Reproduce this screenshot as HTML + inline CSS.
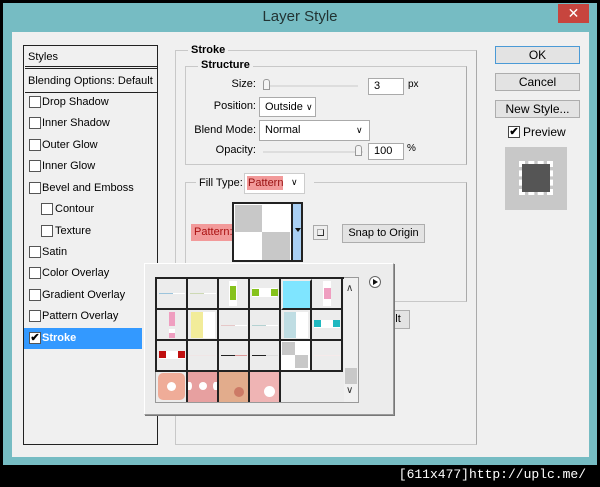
<!DOCTYPE html>
<html><head><meta charset="utf-8"><style>
*{margin:0;padding:0;box-sizing:border-box}
body{width:600px;height:487px;background:#000;position:relative;overflow:hidden;font-family:"Liberation Sans",Tahoma,sans-serif;font-size:11px;color:#000}
.a{position:absolute;white-space:nowrap}
.win{left:3px;top:3px;width:594px;height:462px;background:#76bcc3}
.cont{left:12px;top:32px;width:577px;height:425px;background:#f0f0f0}
.title{left:0;top:8px;width:600px;text-align:center;font-size:15px;color:#233}
.close{left:558px;top:4px;width:31px;height:19px;background:#c7453e;color:#fff;text-align:center;font-size:14px;line-height:19px}
.lp{left:23px;top:45px;width:135px;height:400px;border:1px solid #222;background:#f0f0f0}
.row{position:absolute;left:1px;width:132px;height:21px;border-bottom:1px solid #fafafa;line-height:21px;padding-left:18px}
.grp{border:1px solid #c8c8c8;border-right-color:#aaa}
.lbl{background:#f0f0f0;font-weight:bold;padding:0 3px}
.btn{background:#e3e3e3;border:1px solid #adadad;text-align:center;font-size:12px}
.inp{background:#fff;border:1px solid #aaa;padding-left:5px;line-height:15px}
.rt{text-align:right}
.cell{position:absolute;width:31px;height:31px;border-right:2px solid #222;border-bottom:2px solid #222;background:#ececec}
.ck{width:12px;height:12px;border:1px solid #555;background:#fff}
</style></head><body>
<div class="a win"></div>
<div class="a title">Layer Style</div>
<div class="a close">✕</div>
<div class="a cont"></div>

<div class="a lp">
 <div class="row" style="top:0;height:23px;border-bottom:3px double #222;padding-left:3px;line-height:22px">Styles</div>
 <div class="row" style="top:25px;height:22px;border-bottom:1px solid #222;padding-left:3px">Blending Options: Default</div>
</div>
<div class="a ck" style="left:29px;top:96px"></div><div class="a" style="left:42px;top:96px">Drop Shadow</div>
<div class="a ck" style="left:29px;top:117px"></div><div class="a" style="left:42px;top:117px">Inner Shadow</div>
<div class="a ck" style="left:29px;top:139px"></div><div class="a" style="left:42px;top:139px">Outer Glow</div>
<div class="a ck" style="left:29px;top:160px"></div><div class="a" style="left:42px;top:160px">Inner Glow</div>
<div class="a ck" style="left:29px;top:182px"></div><div class="a" style="left:42px;top:182px">Bevel and Emboss</div>
<div class="a ck" style="left:41px;top:203px"></div><div class="a" style="left:55px;top:203px">Contour</div>
<div class="a ck" style="left:41px;top:225px"></div><div class="a" style="left:55px;top:225px">Texture</div>
<div class="a ck" style="left:29px;top:246px"></div><div class="a" style="left:42px;top:246px">Satin</div>
<div class="a ck" style="left:29px;top:267px"></div><div class="a" style="left:42px;top:267px">Color Overlay</div>
<div class="a ck" style="left:29px;top:289px"></div><div class="a" style="left:42px;top:289px">Gradient Overlay</div>
<div class="a ck" style="left:29px;top:310px"></div><div class="a" style="left:42px;top:310px">Pattern Overlay</div>
<div class="a" style="left:24px;top:328px;width:118px;height:21px;background:#3399ff"></div>
<div class="a ck" style="left:29px;top:332px;font-size:11px;line-height:10px;text-align:center;font-weight:bold">✔</div><div class="a" style="left:42px;top:332px;color:#fff;font-weight:bold">Stroke</div>

<!-- right groups -->
<div class="a grp" style="left:175px;top:50px;width:302px;height:395px"></div>
<div class="a lbl" style="left:188px;top:44px">Stroke</div>
<div class="a grp" style="left:185px;top:66px;width:282px;height:99px"></div>
<div class="a lbl" style="left:198px;top:59px">Structure</div>
<div class="a rt" style="left:180px;top:78px;width:76px">Size:</div>
<div class="a" style="left:263px;top:85px;width:95px;height:2px;background:#ddd"></div>
<div class="a" style="left:263px;top:79px;width:7px;height:11px;border:1px solid #999;background:#f4f4f4;border-radius:3px 3px 0 0"></div>
<div class="a inp" style="left:368px;top:78px;width:36px;height:17px">3</div>
<div class="a" style="left:408px;top:79px;font-size:10px">px</div>
<div class="a rt" style="left:180px;top:100px;width:76px">Position:</div>
<div class="a inp" style="left:259px;top:97px;width:57px;height:20px;line-height:18px;font-size:11px">Outside <span style="font-size:9px">&#x2228;</span></div>
<div class="a rt" style="left:180px;top:124px;width:76px">Blend Mode:</div>
<div class="a inp" style="left:259px;top:120px;width:111px;height:21px;line-height:19px">Normal<span style="position:absolute;left:96px;font-size:9px">&#x2228;</span></div>
<div class="a rt" style="left:180px;top:144px;width:76px">Opacity:</div>
<div class="a" style="left:263px;top:151px;width:100px;height:2px;background:#ddd"></div>
<div class="a" style="left:355px;top:145px;width:7px;height:11px;border:1px solid #999;background:#f4f4f4;border-radius:3px 3px 0 0"></div>
<div class="a inp" style="left:368px;top:143px;width:36px;height:17px">100</div>
<div class="a" style="left:407px;top:143px;font-size:10px">%</div>

<div class="a grp" style="left:185px;top:182px;width:282px;height:120px"></div>
<div class="a" style="left:196px;top:176px;width:118px;height:16px;background:#f0f0f0"></div>
<div class="a" style="left:199px;top:177px">Fill Type:</div>
<div class="a" style="left:244px;top:173px;width:61px;height:21px;background:#fff;border:1px solid #ccc"></div>
<div class="a" style="left:247px;top:176px;width:36px;height:14px;background:#f29a9a;color:#911;font-size:11px;line-height:14px;padding-left:1px">Pattern</div>
<div class="a" style="left:291px;top:177px;font-size:9px">&#x2228;</div>
<div class="a" style="left:191px;top:224px;width:42px;height:17px;background:#f29a9a;color:#a11;line-height:17px;padding-left:3px">Pattern:</div>
<div class="a" style="left:232px;top:202px;width:61px;height:60px;border:2px solid #222;background:#fff"></div>
<div class="a" style="left:235px;top:205px;width:27px;height:27px;background:#c8c8c8"></div>
<div class="a" style="left:262px;top:232px;width:28px;height:28px;background:#c8c8c8"></div>
<div class="a" style="left:292px;top:202px;width:11px;height:60px;border:2px solid #222;border-left:1px solid #222;background:#a9cff3"></div>
<div class="a" style="left:295px;top:228px;border:3px solid transparent;border-top:4px solid #111;width:0;height:0"></div>
<div class="a" style="left:313px;top:225px;width:15px;height:15px;border:1px solid #aaa;background:#eee"></div>
<div class="a" style="left:317px;top:229px;width:7px;height:7px;border:1px solid #333;border-top-color:#aaa;border-left-color:#aaa"></div>
<div class="a btn" style="left:342px;top:224px;width:83px;height:19px;line-height:17px;font-size:11px">Snap to Origin</div>
<div class="a btn" style="left:380px;top:310px;width:30px;height:19px;line-height:17px;font-size:11px">ult</div>

<!-- popup -->
<div class="a" style="left:144px;top:263px;width:250px;height:152px;background:#ececec;border:1px solid #999;border-top-color:#fff;border-left-color:#fff;box-shadow:1px 1px 0 #777"></div>
<div class="a" style="left:155px;top:277px;width:204px;height:126px;border:1px solid #999;background:#ececec"></div>
<div class="a" style="left:155px;top:277px;width:189px;height:95px;border-left:2px solid #222;border-top:2px solid #222"></div>
<div class="a" style="left:157px;top:279px">
 <div class="cell" style="left:0;top:0"><div class="a" style="left:2px;top:14px;width:14px;height:1px;background:#9cc4dc"></div><div class="a" style="left:16px;top:14px;width:12px;height:1px;background:#fff"></div></div>
 <div class="cell" style="left:31px;top:0"><div class="a" style="left:2px;top:14px;width:14px;height:1px;background:#cdd9b4"></div><div class="a" style="left:16px;top:14px;width:12px;height:1px;background:#fff"></div></div>
 <div class="cell" style="left:62px;top:0"><div class="a" style="left:10px;top:2px;width:8px;height:25px;background:#fff"></div><div class="a" style="left:11px;top:7px;width:6px;height:14px;background:#86c21c"></div></div>
 <div class="cell" style="left:93px;top:0"><div class="a" style="left:2px;top:9px;width:25px;height:9px;background:#fff"></div><div class="a" style="left:2px;top:10px;width:7px;height:7px;background:#86c21c"></div><div class="a" style="left:21px;top:10px;width:7px;height:7px;background:#86c21c"></div></div>
 <div class="cell" style="left:124px;top:0;background:#7fe5ff;border:2px solid #ececec;border-right:2px solid #222;border-bottom:2px solid #222"></div>
 <div class="cell" style="left:155px;top:0"><div class="a" style="left:11px;top:2px;width:8px;height:25px;background:#fff"></div><div class="a" style="left:12px;top:9px;width:7px;height:11px;background:#ef9ec0"></div></div>
 <div class="cell" style="left:0;top:31px"><div class="a" style="left:12px;top:2px;width:6px;height:14px;background:#ef9ec0"></div><div class="a" style="left:12px;top:19px;width:6px;height:4px;background:#fff"></div><div class="a" style="left:12px;top:23px;width:6px;height:5px;background:#ef9ec0"></div></div>
 <div class="cell" style="left:31px;top:31px"><div class="a" style="left:3px;top:2px;width:12px;height:26px;background:#f2ec9a"></div><div class="a" style="left:15px;top:2px;width:12px;height:26px;background:#fff"></div></div>
 <div class="cell" style="left:62px;top:31px"><div class="a" style="left:2px;top:15px;width:14px;height:1px;background:#e6c8c8"></div><div class="a" style="left:16px;top:15px;width:12px;height:1px;background:#fff"></div></div>
 <div class="cell" style="left:93px;top:31px"><div class="a" style="left:2px;top:15px;width:14px;height:1px;background:#b4d2d2"></div><div class="a" style="left:16px;top:15px;width:12px;height:1px;background:#fff"></div></div>
 <div class="cell" style="left:124px;top:31px"><div class="a" style="left:3px;top:2px;width:12px;height:26px;background:#bfdde3"></div><div class="a" style="left:15px;top:2px;width:12px;height:26px;background:#fff"></div></div>
 <div class="cell" style="left:155px;top:31px"><div class="a" style="left:2px;top:10px;width:26px;height:8px;background:#fff"></div><div class="a" style="left:2px;top:10px;width:7px;height:7px;background:#1fb8c0"></div><div class="a" style="left:21px;top:10px;width:7px;height:7px;background:#1fb8c0"></div></div>
 <div class="cell" style="left:0;top:62px"><div class="a" style="left:2px;top:10px;width:26px;height:8px;background:#fff"></div><div class="a" style="left:2px;top:10px;width:7px;height:7px;background:#c01010"></div><div class="a" style="left:21px;top:10px;width:7px;height:7px;background:#c01010"></div></div>
 <div class="cell" style="left:31px;top:62px"><div class="a" style="left:2px;top:14px;width:26px;height:1px;background:#f0e6e6"></div></div>
 <div class="cell" style="left:62px;top:62px"><div class="a" style="left:2px;top:14px;width:14px;height:1px;background:#222"></div><div class="a" style="left:16px;top:14px;width:12px;height:1px;background:#d99"></div></div>
 <div class="cell" style="left:93px;top:62px"><div class="a" style="left:2px;top:14px;width:14px;height:1px;background:#222"></div><div class="a" style="left:16px;top:14px;width:12px;height:1px;background:#ddd"></div></div>
 <div class="cell" style="left:122px;top:60px;width:33px;height:33px;background:#fff;border:2px solid #222"><div class="a" style="left:1px;top:1px;width:13px;height:13px;background:#c8c8c8"></div><div class="a" style="left:14px;top:14px;width:13px;height:13px;background:#c8c8c8"></div></div>
 <div class="cell" style="left:155px;top:62px"><div class="a" style="left:2px;top:14px;width:26px;height:1px;background:#f6eaea"></div></div>
 <div class="cell" style="left:0;top:93px;height:30px;border-bottom:0;background:#ececec"><div class="a" style="left:1px;top:1px;width:27px;height:27px;background:#efac98;border-radius:5px"></div><div class="a" style="left:10px;top:10px;width:9px;height:9px;border-radius:50%;background:#fff"></div></div>
 <div class="cell" style="left:31px;top:93px;height:30px;border-bottom:0;background:#e7a0a0"><div class="a" style="left:11px;top:10px;width:8px;height:8px;border-radius:50%;background:#fff"></div><div class="a" style="left:0;top:10px;width:4px;height:8px;background:#fff;border-radius:0 50% 50% 0"></div><div class="a" style="left:25px;top:10px;width:4px;height:8px;background:#fff;border-radius:50% 0 0 50%"></div></div>
 <div class="cell" style="left:62px;top:93px;height:30px;border-bottom:0;background:#e2ac8c"><div class="a" style="left:15px;top:15px;width:10px;height:10px;border-radius:50%;background:#cc7a66"></div></div>
 <div class="cell" style="left:93px;top:93px;height:30px;border-bottom:0;background:#efb4b4"><div class="a" style="left:14px;top:14px;width:11px;height:11px;border-radius:50%;background:#fff"></div></div>
</div>
<div class="a" style="left:344px;top:278px;width:14px;height:124px;background:#f0f0f0"></div>
<div class="a" style="left:346px;top:283px;font-size:10px;color:#333">&#x2227;</div>
<div class="a" style="left:346px;top:385px;font-size:10px;color:#333">&#x2228;</div>
<div class="a" style="left:345px;top:368px;width:12px;height:16px;background:#c8c8c8"></div>
<div class="a" style="left:369px;top:276px;width:12px;height:12px;border:1px solid #666;border-radius:50%;background:#fff"></div>
<div class="a" style="left:373px;top:279px;border-left:5px solid #111;border-top:3px solid transparent;border-bottom:3px solid transparent;width:0;height:0"></div>

<div class="a btn" style="left:495px;top:46px;width:85px;height:18px;line-height:16px;border-color:#4a9ad6">OK</div>
<div class="a btn" style="left:495px;top:73px;width:85px;height:18px;line-height:16px">Cancel</div>
<div class="a btn" style="left:495px;top:100px;width:85px;height:18px;line-height:16px">New Style...</div>
<div class="a ck" style="left:508px;top:126px;border-color:#444;font-size:11px;line-height:10px;text-align:center;font-weight:bold">✔</div>
<div class="a" style="left:523px;top:125px;font-size:12px">Preview</div>
<div class="a" style="left:505px;top:147px;width:62px;height:63px;background:#c8c8c8"></div>
<div class="a" style="left:519px;top:161px;width:34px;height:34px;border:3px dashed #fff"></div>
<div class="a" style="left:522px;top:164px;width:28px;height:28px;background:#555"></div>

<div class="a" style="right:14px;top:467px;color:#fff;font-family:'Liberation Mono',monospace;font-size:13px">[611x477]http://uplc.me/</div>
</body></html>
